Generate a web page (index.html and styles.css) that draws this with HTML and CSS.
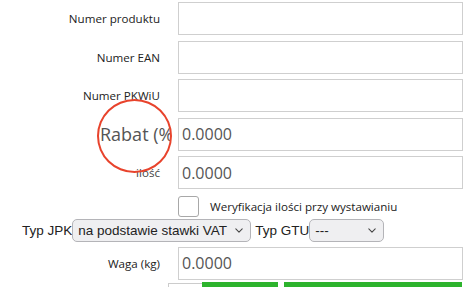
FILE: index.html
```html
<!DOCTYPE html>
<html lang="pl">
<head>
<meta charset="utf-8">
<title>Formularz produktu</title>
<link rel="stylesheet" href="styles.css">
</head>
<body>
<form class="form">
  <div class="row">
    <label class="lbl">Numer produktu</label>
    <input class="inp" type="text" value="">
  </div>
  <div class="row">
    <label class="lbl">Numer EAN</label>
    <input class="inp" type="text" value="">
  </div>
  <div class="row">
    <label class="lbl">Numer PKWiU</label>
    <input class="inp" type="text" value="">
  </div>
  <div class="row">
    <label class="lbl lbl-big"><span class="clip">Rabat (%)</span></label>
    <input class="inp" type="text" value="0.0000">
  </div>
  <div class="row">
    <label class="lbl lbl-small">ilość</label>
    <input class="inp" type="text" value="0.0000">
  </div>
  <div class="row row-check">
    <span></span>
    <div class="check-wrap">
      <span class="checkbox"></span>
      <span class="check-text">Weryfikacja ilości przy wystawianiu</span>
    </div>
  </div>
  <div class="row-selects">
    <span class="sel-label">Typ JPK</span>
    <span class="select sel-jpk">na podstawie stawki VAT<svg class="chev" viewBox="0 0 10 6" width="8" height="5"><path d="M1 1 L5 5 L9 1" fill="none" stroke="#444" stroke-width="1.3" stroke-linecap="round" stroke-linejoin="round"/></svg></span>
    <span class="sel-label sel-label-gtu">Typ GTU</span>
    <span class="select sel-gtu">---<svg class="chev" viewBox="0 0 10 6" width="8" height="5"><path d="M1 1 L5 5 L9 1" fill="none" stroke="#444" stroke-width="1.3" stroke-linecap="round" stroke-linejoin="round"/></svg></span>
  </div>
  <div class="row row-waga">
    <label class="lbl">Waga (kg)</label>
    <input class="inp" type="text" value="0.0000">
  </div>
  <div class="row-buttons">
    <span class="btn-plain"></span>
    <span class="btn-green btn-a"></span>
    <span class="btn-green btn-b"></span>
  </div>
</form>
<div class="annot-circle"></div>
</body>
</html>
```
FILE: styles.css
```css
html, body {
  margin: 0;
  padding: 0;
  background: #ffffff;
  overflow: hidden;
}
body {
  width: 476px;
  height: 292px;
  font-family: "Open Sans", "DejaVu Sans", sans-serif;
  color: #333;
}
.form {
  padding-top: 2px;
}
.row {
  display: grid;
  grid-template-columns: 160px 285px;
  column-gap: 18px;
  height: 33px;
  margin-bottom: 5.5px;
  align-items: center;
}
.lbl {
  text-align: right;
  font-size: 11.6px;
  color: #222;
  white-space: nowrap;
}
.lbl-big {
  justify-self: end;
  margin-right: -10px;
  font-size: 18px;
  color: #555;
}
.clip {
  display: block;
  width: 70px;
  overflow: hidden;
  white-space: nowrap;
  text-align: left;
}
.lbl-small {
  color: #444;
}
.inp {
  box-sizing: border-box;
  width: 285px;
  height: 33px;
  margin: 0;
  border: 1px solid #cfcfcf;
  border-radius: 0;
  padding: 0 3px;
  font-family: "Open Sans", "DejaVu Sans", sans-serif;
  font-size: 16px;
  color: #555;
  background: #fff;
  outline: none;
}
.row-check {
  height: 21px;
  margin-top: 6.5px;
  margin-bottom: 2px;
}
.check-wrap {
  display: flex;
  align-items: center;
  gap: 11px;
}
.checkbox {
  box-sizing: border-box;
  width: 21px;
  height: 21px;
  border: 1px solid #a8a8a8;
  border-radius: 3px;
  background: #fff;
}
.check-text {
  font-size: 11.6px;
  color: #222;
  white-space: nowrap;
}
.row-selects {
  display: flex;
  align-items: center;
  height: 23px;
  padding-left: 22px;
  margin-bottom: 5px;
  font-family: "Liberation Sans", Arial, sans-serif;
  font-size: 13.5px;
  color: #222;
}
.sel-label {
  white-space: nowrap;
}
.sel-label-gtu {
  margin-left: 4px;
}
.select {
  box-sizing: border-box;
  display: flex;
  align-items: center;
  justify-content: space-between;
  height: 23px;
  padding: 0 7px 0 5px;
  border: 1px solid #b4b4b8;
  border-radius: 5px;
  background: #efeff1;
  color: #222;
  white-space: nowrap;
}
.sel-jpk {
  width: 179px;
}
.sel-gtu {
  width: 75px;
}
.chev {
  display: block;
  flex: none;
}
.row-waga {
  margin-bottom: 2px;
}
.row-buttons {
  display: flex;
  height: 5px;
  overflow: hidden;
  padding-left: 168px;
}
.btn-plain {
  box-sizing: border-box;
  width: 34px;
  height: 5px;
  margin-top: 1px;
  border-top: 1px solid #cccccc;
  border-left: 1px solid #cccccc;
}
.btn-green {
  height: 5px;
  background: #2db32d;
}
.btn-a {
  width: 76px;
}
.btn-b {
  width: 178px;
  margin-left: 6px;
}
.annot-circle {
  position: absolute;
  left: 97px;
  top: 99px;
  width: 71px;
  height: 70px;
  border: 2px solid #e8432c;
  border-radius: 50%;
  pointer-events: none;
}
```
